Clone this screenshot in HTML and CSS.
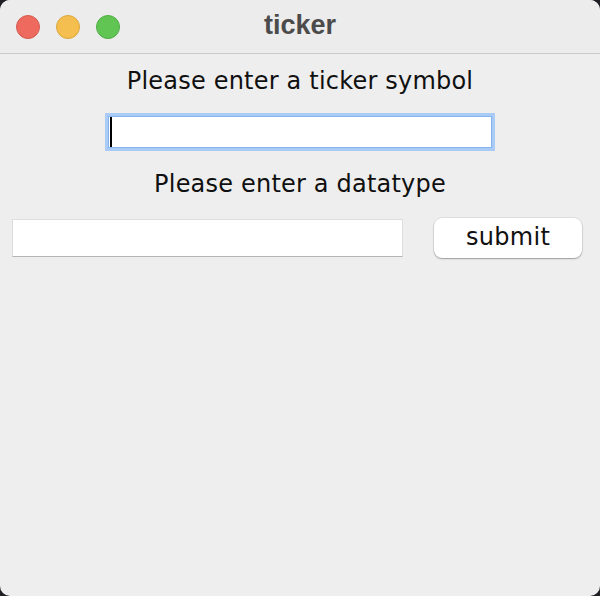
FILE: index.html
```html
<!DOCTYPE html>
<html>
<head>
<meta charset="utf-8">
<link rel="stylesheet" href="styles.css">
</head>
<body>
<div class="window">
  <div class="titlebar">
    <div class="lights">
      <span class="light red"></span>
      <span class="light yellow"></span>
      <span class="light green"></span>
    </div>
    <div class="title">ticker</div>
  </div>
  <div class="content">
    <div class="label label-first">Please enter a ticker symbol</div>
    <div class="field field-focus"><span class="caret"></span></div>
    <div class="label label-second">Please enter a datatype</div>
    <div class="row">
      <div class="field field-plain"></div>
      <button class="button">submit</button>
    </div>
  </div>
</div>
</body>
</html>
```

FILE: styles.css
```css
html, body {
  margin: 0;
  padding: 0;
}
body {
  width: 600px;
  height: 596px;
  background: #1e1f22;
  overflow: hidden;
}
.window {
  width: 600px;
  height: 596px;
  background: #eeeeee;
  border-radius: 10px;
  overflow: hidden;
  display: flex;
  flex-direction: column;
  font-family: "DejaVu Sans", "Liberation Sans", sans-serif;
}
.titlebar {
  height: 53px;
  flex: none;
  background: #ececec;
  border-bottom: 1px solid #cbcbcb;
  display: flex;
  align-items: center;
  position: relative;
}
.lights {
  display: flex;
  gap: 16px;
  padding-left: 16px;
  padding-top: 1px;
}
.light {
  width: 22px;
  height: 22px;
  border-radius: 50%;
  display: block;
  border: 1px solid transparent;
}
.red { background: #ee6a5f; border-color: #d65b50; }
.yellow { background: #f5bf4f; border-color: #d9a73c; }
.green { background: #61c554; border-color: #50ad45; }
.title {
  position: absolute;
  left: 0;
  right: 0;
  top: 0;
  height: 51px;
  line-height: 51px;
  text-align: center;
  font-family: "Liberation Sans", Arial, sans-serif;
  font-weight: bold;
  font-size: 27px;
  color: #4b4b4b;
  pointer-events: none;
}
.content {
  flex: 1;
  display: flex;
  flex-direction: column;
  align-items: center;
}
.label {
  font-size: 24px;
  letter-spacing: 0.2px;
  line-height: 28px;
  height: 28px;
  color: #101010;
  text-align: center;
}
.label-first { margin-top: 13px; }
.label-second { margin-top: 19px; }
.field {
  background: #ffffff;
  box-sizing: border-box;
}
.field-focus {
  margin-top: 18px;
  width: 390px;
  height: 38px;
  border: 3px solid #a9cbf5;
  box-shadow: inset 0 0 0 1px #86b3ef;
  display: flex;
  align-items: center;
  padding-left: 2px;
}
.caret {
  width: 2px;
  height: 30px;
  background: #000;
  display: block;
}
.row {
  margin-top: 20px;
  align-self: stretch;
  display: flex;
  align-items: center;
  padding-left: 12px;
  gap: 31px;
}
.field-plain {
  width: 391px;
  height: 38px;
  border: 1px solid #dddddd;
  border-bottom-color: #b5b5b5;
}
.button {
  width: 148px;
  height: 40px;
  background: #ffffff;
  border: none;
  border-radius: 8px;
  box-shadow: 0 0 0 0.5px rgba(0,0,0,0.12), 0 1px 1.5px rgba(0,0,0,0.3);
  font-family: "DejaVu Sans", "Liberation Sans", sans-serif;
  font-size: 24px;
  letter-spacing: 0.3px;
  color: #111;
  padding: 0 0 3px 0;
}
```
